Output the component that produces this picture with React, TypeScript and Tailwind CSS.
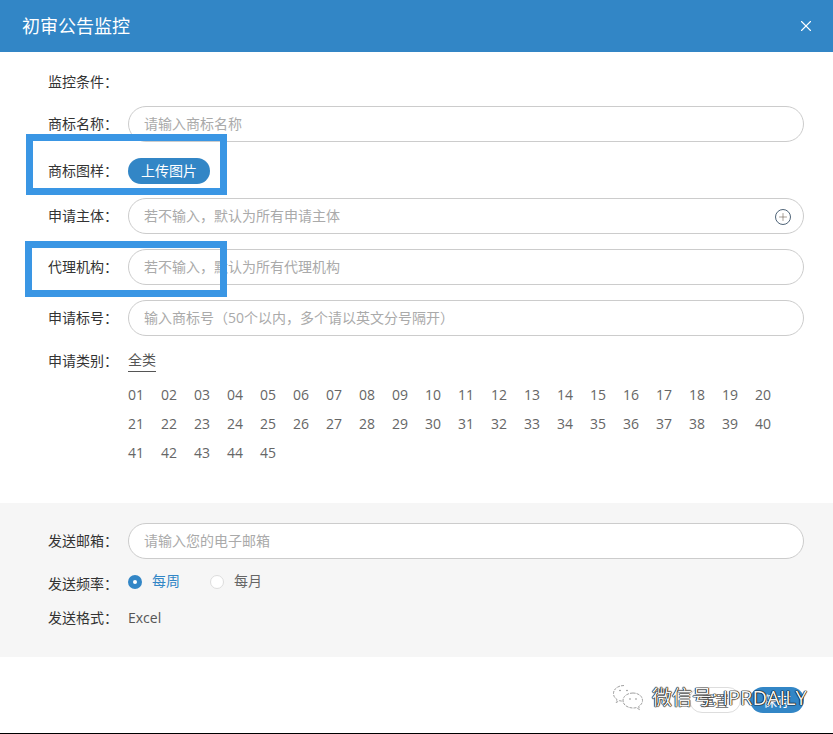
import { X, Plus } from 'lucide-react';

const font = { fontFamily: '"Open Sans", "Noto Sans CJK SC", sans-serif' };

const classes = Array.from({ length: 45 }, (_, i) => String(i + 1).padStart(2, '0'));

const Field = ({ label, placeholder, icon }: { label: string; placeholder: string; icon?: boolean }) => (
  <div className="flex items-center h-9">
    <span className="w-20 shrink-0 pb-[2px] text-[14px] text-[#333]">{label}</span>
    <div className="relative flex-1 h-9 rounded-[18px] border border-[#ccc] bg-white flex items-center pl-[15px] pb-[2px] text-[14px] text-[#aaa]">
      {placeholder}
      {icon && (
        <span className="absolute right-[12px] top-[10px] w-[16px] h-[16px] rounded-full border border-[#4f6478] flex items-center justify-center">
          <Plus size={12} strokeWidth={1.2} className="text-[#6b5f50]" />
        </span>
      )}
    </div>
  </div>
);

const App = () => {
  return (
    <div className="relative w-[833px] h-[734px] bg-white overflow-hidden flex flex-col" style={font}>
      {/* Header */}
      <header className="h-[52px] shrink-0 bg-[#3286c6] flex items-center justify-between pl-[22px] pr-[18px] text-white">
        <h1 className="text-[18px] font-normal">初审公告监控</h1>
        <X size={18} strokeWidth={1.5} />
      </header>

      {/* Monitor conditions */}
      <section className="pl-[48px] pr-[29px] flex flex-col">
        <div className="h-[20px] mt-[20px] pb-[2px] flex items-center text-[14px] text-[#333]">监控条件：</div>
        <div className="mt-[14px]">
          <Field label="商标名称：" placeholder="请输入商标名称" />
        </div>
        <div className="mt-[16px] h-[26px] flex items-center">
          <span className="w-20 shrink-0 pb-[2px] text-[14px] text-[#333]">商标图样：</span>
          <button className="w-[82px] h-[26px] pb-[2px] rounded-[13px] bg-[#3286c6] text-white text-[14px]">上传图片</button>
        </div>
        <div className="mt-[14px]">
          <Field label="申请主体：" placeholder="若不输入，默认为所有申请主体" icon />
        </div>
        <div className="mt-[15px]">
          <Field label="代理机构：" placeholder="若不输入，默认为所有代理机构" />
        </div>
        <div className="mt-[15px]">
          <Field label="申请标号：" placeholder="输入商标号（50个以内，多个请以英文分号隔开）" />
        </div>
        <div className="mt-[15px] h-[20px] flex items-center">
          <span className="w-20 shrink-0 pb-[2px] text-[14px] text-[#333]">申请类别：</span>
          <span className="text-[14px] text-[#555] border-b border-[#555] leading-[18px] pb-[2px]">全类</span>
        </div>
        <div className="ml-20 mt-[10px] grid grid-cols-[repeat(20,33px)] auto-rows-[29px] text-[14px] text-[#666] leading-[28px]">
          {classes.map((c) => (
            <span key={c}>{c}</span>
          ))}
        </div>
      </section>

      {/* Send options */}
      <section className="mt-[35px] h-[154px] shrink-0 bg-[#f6f6f6] pl-[48px] pr-[29px] pt-[20px] flex flex-col">
        <Field label="发送邮箱：" placeholder="请输入您的电子邮箱" />
        <div className="mt-[13px] h-[20px] flex items-center">
          <span className="w-20 shrink-0 mt-[3px] text-[14px] text-[#333]">发送频率：</span>
          <span className="w-[14px] h-[14px] rounded-full bg-[#3286c6] flex items-center justify-center">
            <span className="w-1 h-1 rounded-full bg-white" />
          </span>
          <span className="ml-[10px] pb-[3px] text-[14px] text-[#3286c6]">每周</span>
          <span className="ml-[30px] w-[14px] h-[14px] rounded-full bg-white border border-[#ddd]" />
          <span className="ml-[10px] pb-[3px] text-[14px] text-[#666]">每月</span>
        </div>
        <div className="mt-[15px] h-[20px] flex items-center">
          <span className="w-20 shrink-0 text-[14px] text-[#333]">发送格式：</span>
          <span className="text-[14px] text-[#555]">Excel</span>
        </div>
      </section>

      {/* Footer buttons */}
      <footer className="flex-1 flex justify-end items-start pt-[30px] pr-[29px] gap-[9px] border-b border-black">
        <button className="w-[52px] h-[26px] rounded-[13px] border border-[#ddd] bg-white text-[14px] text-[#666]">重置</button>
        <button className="w-[54px] h-[26px] rounded-[13px] bg-[#3286c6] text-[14px] text-white">保存</button>
      </footer>

      {/* Annotation frames drawn over the form */}
      <div className="absolute left-[26px] top-[134px] w-[201px] h-[61px] border-[7px] border-[#3a96e4]" />
      <div className="absolute left-[25px] top-[241px] w-[202px] h-[56px] border-[7px] border-[#3a96e4]" />

      {/* Watermark */}
      <div className="absolute left-[612px] top-[683px] flex items-center gap-[8px] text-[#f4f4f4] text-[20px] leading-[30px] [text-shadow:0_0_1px_#000,0_0_1px_#000,0_0_1px_#000,0_0_1px_#000]">
        <svg width="32" height="29" viewBox="0 0 32 29" fill="none" stroke="#888" strokeWidth="0.8" strokeDasharray="3 1">
          <path d="M12 1.500c-6 0-10.500 3.500-10.500 8 0 2.500 1.200 4.500 3.500 6l-.8 3 3.300-1.800c1.200.3 2.500.5 4 .5" />
          <path d="M21 9c-5.500 0-10 3.200-10 7.500s4.500 7.500 10 7.500c1.200 0 2.300-.1 3.300-.4l3.200 2-.8-3.200c2.300-1.400 3.800-3.500 3.800-5.900C30.500 12.200 26.500 9 21 9z" />
          <path d="M8 6.500h.01M15 6.500h.01M18 15h.01M24 15h.01" strokeWidth="1.600" strokeLinecap="round" strokeDasharray="none" />
        </svg>
        <span className="whitespace-nowrap">微信号: IPRDAILY</span>
      </div>
    </div>
  );
};

export default App;
